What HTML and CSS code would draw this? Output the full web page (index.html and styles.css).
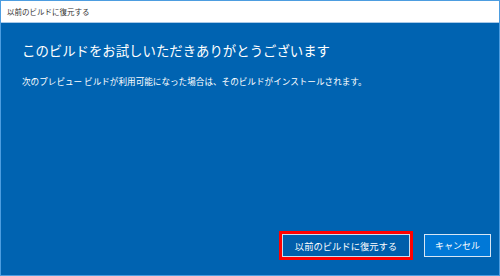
FILE: index.html
```html
<!DOCTYPE html>
<html lang="ja">
<head>
<meta charset="utf-8">
<link rel="stylesheet" href="styles.css">
</head>
<body>
<div class="window">
  <div class="titlebar">以前のビルドに復元する</div>
  <div class="content">
    <h1 class="heading">このビルドをお試しいただきありがとうございます</h1>
    <p class="desc">次のプレビュー ビルドが利用可能になった場合は、そのビルドがインストールされます。</p>
    <div class="footer">
      <button class="btn btn-primary">以前のビルドに復元する</button>
      <button class="btn btn-cancel">キャンセル</button>
    </div>
  </div>
</div>
</body>
</html>
```

FILE: styles.css
```css
html, body {
  margin: 0;
  padding: 0;
}
body {
  width: 500px;
  height: 276px;
  font-family: "Noto Sans CJK JP", "Noto Sans", sans-serif;
}
.window {
  box-sizing: border-box;
  width: 500px;
  height: 276px;
  border: 1px solid #4d9de0;
  display: flex;
  flex-direction: column;
  background: #0063b1;
}
.titlebar {
  height: 21px;
  flex: none;
  background: #ffffff;
  border-bottom: 1px solid #a9c9e8;
  color: #333333;
  font-size: 7.5px;
  line-height: 21px;
  padding-left: 6px;
}
.content {
  flex: 1;
  display: flex;
  flex-direction: column;
  padding: 17px 8px 18px 21px;
  color: #ffffff;
}
.heading {
  margin: 0;
  font-size: 13.4px;
  line-height: 20px;
  font-weight: normal;
  letter-spacing: 0;
}
.desc {
  margin: 15px 0 0 0;
  font-size: 8.6px;
  line-height: 12px;
}
.footer {
  margin-top: auto;
  display: flex;
  justify-content: flex-end;
  gap: 14px;
}
.btn {
  box-sizing: border-box;
  height: 23px;
  padding: 0;
  font-family: "Noto Sans CJK JP", "Noto Sans", sans-serif;
  font-size: 9px;
  color: #ffffff;
  cursor: pointer;
}
.btn-primary {
  width: 128px;
  font-size: 9.3px;
  background: #005eab;
  border: 1px solid #c9dcee;
  outline: 3px solid #ff0000;
  outline-offset: 0;
  border-radius: 0;
}
.btn-cancel {
  width: 67px;
  background: #0078d7;
  border: 1px solid #d6e6f5;
}
```
